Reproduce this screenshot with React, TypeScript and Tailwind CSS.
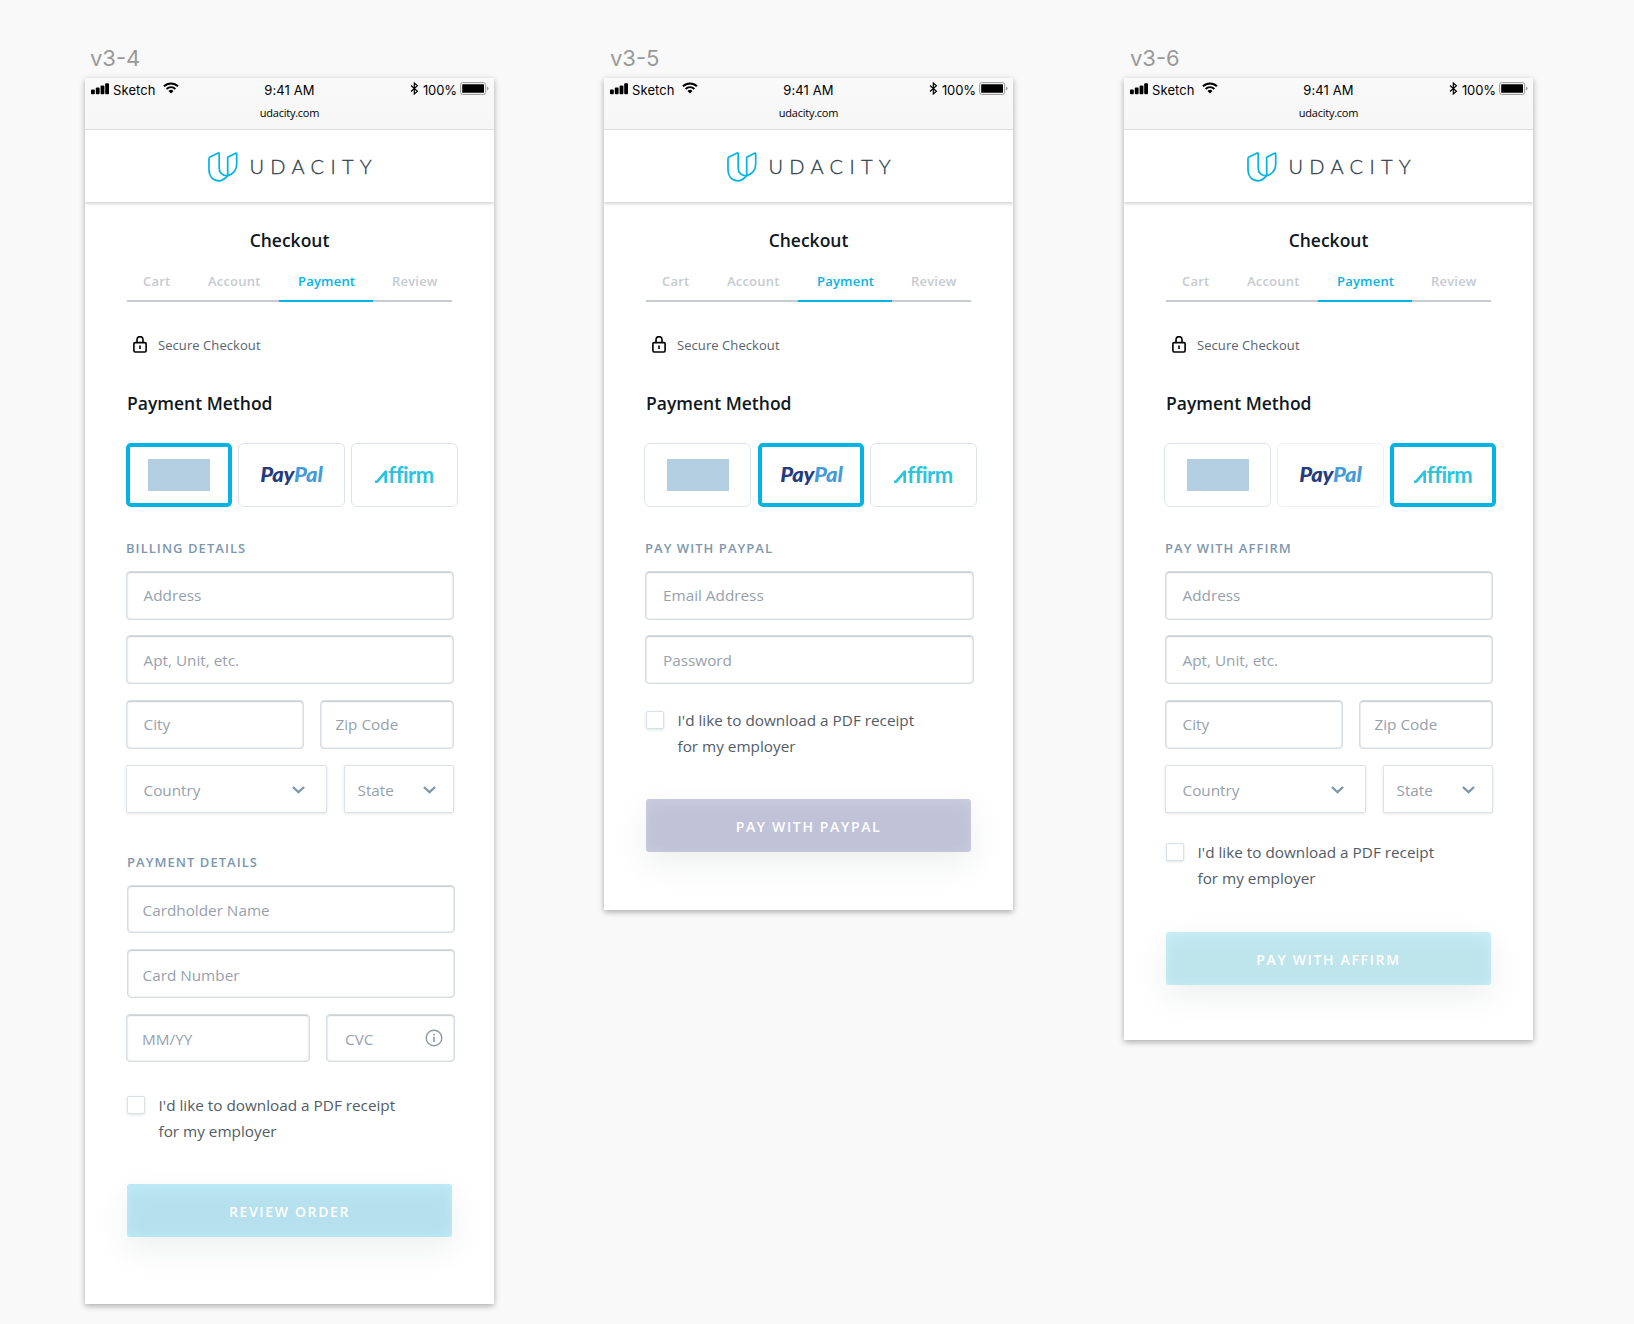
import React from "react";

const OPEN = "font-['Open_Sans','Noto_Sans',sans-serif]";
const SYSTEM = "font-['Inter',sans-serif]";

type Method = "card" | "paypal" | "affirm";

function StatusBar() {
  return (
    <div className="h-[52px] border-b border-[#dedede] bg-gradient-to-b from-[#f9f9f9] to-[#f7f7f7] text-black">
      <div className={`grid h-6 grid-cols-3 items-center text-[13px] ${SYSTEM}`}>
        <div className="flex items-center pl-[6px]">
          <svg width="18" height="12" viewBox="0 0 18 12" className="mb-[3px]">
            <rect x="0" y="6.6" width="3.8" height="4.6" rx="1" />
            <rect x="4.8" y="4.6" width="3.8" height="6.6" rx="1" />
            <rect x="9.6" y="2.5" width="3.8" height="8.7" rx="1" />
            <rect x="14.2" y="0.2" width="3.8" height="11" rx="1" />
          </svg>
          <span className="ml-[4px] pt-[2px] tracking-[0.1px]">Sketch</span>
          <svg width="16" height="12" viewBox="0 0 16 12" className="mb-[4px] ml-[7px]" fill="none" stroke="#000">
            <path d="M1 4.3 A10 10 0 0 1 15 4.3" strokeWidth="2" />
            <path d="M3.6 7 A6.2 6.2 0 0 1 12.4 7" strokeWidth="1.8" />
            <path d="M8 11.4 L5.5 8.9 A3.6 3.6 0 0 1 10.5 8.9 Z" fill="#000" stroke="none" />
          </svg>
        </div>
        <div className="pt-[2px] text-center tracking-[0.1px]">9:41 AM</div>
        <div className="flex items-center justify-end pr-[5px]">
          <svg width="9" height="13" viewBox="0 0 9 13" className="mb-[4px]" fill="none" stroke="#000" strokeWidth="1.2">
            <path d="M1 3.5 L7.4 9.3 L4.3 12 V1 L7.4 3.7 L1 9.5" />
          </svg>
          <span className="ml-[4px] pt-[2px] tracking-[-0.1px]">100%</span>
          <svg width="29" height="13" viewBox="0 0 29 13" className="mb-[3px] ml-[3px]">
            <rect x="0.6" y="0.6" width="25" height="11.8" rx="2" fill="#f8f8f8" stroke="#9a9a9a" />
            <rect x="2.2" y="2.2" width="21.8" height="8.6" rx="0.5" />
            <path d="M27 4.4 A2.2 2.2 0 0 1 27 8.6 Z" fill="#9a9a9a" />
          </svg>
        </div>
      </div>
      <div className={`flex h-[22px] items-center justify-center text-[11px] tracking-[-0.25px] ${OPEN}`}>udacity.com</div>
    </div>
  );
}

function Brand() {
  return (
    <div className="flex h-[72px] items-center bg-white pl-[123px] shadow-[0_2px_3px_rgba(0,0,0,0.16)]">
      <svg width="30" height="30" viewBox="0 0 30 30" className="mt-px" fill="none" stroke="#02b3e4" strokeWidth="1.7" strokeLinejoin="round">
        <path d="M1 5.4 L10.2 1 Q11.2 0.8 11.2 2 V16 C11.2 21 14.5 23.6 19.7 23.8" />
        <path d="M1 5.4 V17 C1 24.5 5 28.8 11 28.8 C14.5 28.8 17 26.5 19.7 23.8 C25.5 21.8 28.7 18 28.7 12 V2 Q28.7 0.8 27.6 1.2 L19.7 5.2 V23.8" />
      </svg>
      <span className="ml-[11.5px] font-['Lato',sans-serif] text-[20px] font-light leading-none tracking-[6.3px] text-[#2e3d49] [-webkit-text-stroke:0.3px_#2e3d49]">
        UDACITY
      </span>
    </div>
  );
}

function Tabs() {
  const idle = "h-10 border-b-2 border-[#c5cbd1] text-[#c5cad0]";
  return (
    <div className="ml-[42px] mt-[10px] grid w-[325px] grid-cols-[62px_90px_94px_79px] text-[13px] font-semibold leading-[38px] tracking-[0.2px]">
      <div className={`${idle} pl-4`}>Cart</div>
      <div className={`${idle} pl-[19px]`}>Account</div>
      <div className="h-10 border-b-2 border-[#02b3e4] pl-[19px] text-[#02b3e4]">Payment</div>
      <div className={`${idle} pl-[19px]`}>Review</div>
    </div>
  );
}

function Lock() {
  return (
    <svg width="14" height="17" viewBox="0 0 14 17" fill="none" stroke="#000" strokeWidth="1.6">
      <rect x="0.9" y="6.6" width="12.2" height="9.4" rx="1.2" />
      <path d="M4 6.6 V3.6 A3 3 0 0 1 10 3.6 V6.6" />
      <path d="M7 9.5 V13" />
    </svg>
  );
}

function MethodCard({ on, faint, children }: { on: boolean; faint?: boolean; children: React.ReactNode }) {
  return (
    <div
      className={
        on
          ? "flex h-16 w-[106px] items-center justify-center rounded-[5px] border-4 border-[#02b3e4] bg-white"
          : `flex h-16 w-[107px] items-center justify-center rounded-[6px] border bg-white ${faint ? "border-[#eef0f4]" : "border-[#dde3ea]"}`
      }
    >
      {children}
    </div>
  );
}

function Methods({ active }: { active: Method }) {
  return (
    <div className="ml-[40px] mt-7 grid grid-cols-[107px_107px_107px] gap-[6px]">
      <div className={active === "card" ? "pl-px" : ""}>
        <MethodCard on={active === "card"}>
          <div className="h-8 w-[62px] bg-[#b4cee1]" />
        </MethodCard>
      </div>
      <div className={active === "paypal" ? "pl-px" : ""}>
        <MethodCard on={active === "paypal"} faint={active === "affirm"}>
          <span className="inline-block scale-x-[1.1] pb-[3px] font-['Lato',sans-serif] text-[20px] font-black italic leading-none tracking-[-0.2px] text-[#253b80]">
            Pay<span className="text-[#469bdb]">Pal</span>
          </span>
        </MethodCard>
      </div>
      <MethodCard on={active === "affirm"}>
        <div className="flex items-end pb-[2px]" aria-label="Affirm">
          <svg width="13" height="14" viewBox="0 0 13 14" className="mb-[3px]" fill="none" stroke="#2bc4df" strokeWidth="2.6">
            <path d="M0 12.7 H2.2 L10.7 2.6 V14" strokeLinejoin="round" />
          </svg>
          <span className="font-['Lato',sans-serif] text-[22px] font-bold leading-[23px] tracking-[-0.5px] text-[#2bc4df]">ffirm</span>
        </div>
      </MethodCard>
    </div>
  );
}

const PLACEHOLDER = "text-[15.3px] text-[#97a1ac]";

function Field({ label, className }: { label: string; className: string }) {
  return (
    <div
      className={`flex items-center rounded-[4px] border border-[#d5dce2] bg-white shadow-[inset_0_1px_1px_#c9ced3,inset_0_0_2px_#c5ccd2] ${PLACEHOLDER} ${className}`}
    >
      {label}
    </div>
  );
}

function Select({ label, className }: { label: string; className: string }) {
  return (
    <div
      className={`flex h-12 items-center justify-between rounded-[2px] border border-[#dbe2e8] bg-white pt-[2px] shadow-[0_1px_3px_rgba(46,61,73,0.12)] ${PLACEHOLDER} ${className}`}
    >
      {label}
      <svg width="13" height="8" viewBox="0 0 13 8" fill="none" stroke="#7d97ad" strokeWidth="2.3">
        <path d="M0.9 1 L6.5 6.2 L12.1 1" />
      </svg>
    </div>
  );
}

function SectionTitle({ text, className }: { text: string; className: string }) {
  return (
    <div className={`flex h-5 items-center pt-[2px] text-[13px] font-semibold tracking-[1.05px] text-[#7d97ad] ${className}`}>{text}</div>
  );
}

function AddressFields() {
  return (
    <div className="ml-[41px] mt-[13px] w-[328px]">
      <Field label="Address" className="h-[49px] pl-[16.5px]" />
      <Field label="Apt, Unit, etc." className="mt-[15px] h-[49px] pl-[16.5px] pt-[2px]" />
      <div className="mt-4 flex justify-between">
        <Field label="City" className="h-[49px] w-[178px] pl-[16.5px]" />
        <Field label="Zip Code" className="h-[49px] w-[134px] pl-[14.5px]" />
      </div>
      <div className="mt-4 flex justify-between">
        <Select label="Country" className="w-[201px] pl-[16.5px] pr-[21px]" />
        <Select label="State" className="w-[110px] pl-[12.5px] pr-[17px]" />
      </div>
    </div>
  );
}

function Receipt({ className }: { className: string }) {
  return (
    <div className={`ml-[42px] flex ${className}`}>
      <div className="mt-1 size-[18px] rounded-[2px] border border-[#d8e1e8] bg-white shadow-[0_1px_3px_rgba(46,61,73,0.15)]" />
      <div className="ml-[13.5px] text-[15.3px] leading-[26px] text-[#525c65]">
        I'd like to download a PDF receipt
        <br />
        for my employer
      </div>
    </div>
  );
}

function Action({ label, className }: { label: string; className: string }) {
  return (
    <button
      className={`ml-[42px] flex h-[53px] w-[325px] items-center justify-center rounded-[4px] pt-px text-[14px] font-semibold tracking-[1.65px] text-white ${className}`}
    >
      {label}
    </button>
  );
}

function Phone({ name, active, className, children }: { name: string; active: Method; className: string; children: React.ReactNode }) {
  return (
    <div>
      <div className={`h-[34px] text-[22px] leading-[28px] text-[#999] ${active === "card" ? "pl-[5px]" : "pl-[6px]"} ${SYSTEM}`}>{name}</div>
      <div className={`w-[409px] overflow-hidden bg-white shadow-[0_2px_6px_rgba(0,0,0,0.32)] ${OPEN} ${className}`}>
        <StatusBar />
        <Brand />
        <h1 className="mt-[26px] h-6 text-center text-[17.5px] font-semibold leading-6 text-[#0f1820]">Checkout</h1>
        <Tabs />
        <div className="ml-[48px] mt-8 flex h-[22px] items-center text-[13px] text-[#58646f]">
          <div className="mb-[2px]">
            <Lock />
          </div>
          <span className="ml-[11px] pt-[2px] tracking-[0.07px]">Secure Checkout</span>
        </div>
        <h2 className="ml-[42px] mt-[35px] h-6 text-[17.5px] font-semibold leading-6 text-[#0f1820]">Payment Method</h2>
        <Methods active={active} />
        {children}
      </div>
    </div>
  );
}

export default function App() {
  return (
    <div className="flex h-[1324px] w-[1634px] items-start overflow-hidden bg-[#f9f9f9] pl-[85px] pt-[44px]">
      <Phone name="v3-4" active="card" className="h-[1226px]">
        <SectionTitle text="BILLING DETAILS" className="ml-[41px] mt-[31px]" />
        <AddressFields />
        <SectionTitle text="PAYMENT DETAILS" className="ml-[42px] mt-[39px]" />
        <div className="ml-[42px] mt-[13px] w-[328px]">
          <Field label="Cardholder Name" className="h-12 pl-[14.5px] pt-[2px]" />
          <Field label="Card Number" className="mt-4 h-[49px] pl-[14.5px] pt-[3px]" />
        </div>
        <div className="ml-[41px] mt-4 flex w-[329px] justify-between">
          <Field label="MM/YY" className="h-[48px] w-[184px] pl-[15px] pt-[2px]" />
          <div className="grid">
            <Field label="CVC" className="col-start-1 row-start-1 h-[48px] w-[129px] pl-[18px] pt-[2px]" />
            <svg width="18" height="18" viewBox="0 0 18 18" className="col-start-1 row-start-1 mr-3 self-center justify-self-end" fill="none" stroke="#8d9aa7" strokeWidth="1.4">
              <circle cx="9" cy="9" r="7.8" />
              <path d="M9 7.8 V13 M9 4.8 V6.4" strokeWidth="1.6" />
            </svg>
          </div>
        </div>
        <Receipt className="mt-[30px]" />
        <Action
          label="REVIEW ORDER"
          className="mt-10 bg-[#b6e0ed] shadow-[0_12px_32px_rgba(30,45,50,0.08),inset_0_8px_18px_-4px_#beebf8,inset_0_0_10px_#beebf8]"
        />
      </Phone>
      <div className="w-[110px]" />
      <Phone name="v3-5" active="paypal" className="h-[832px]">
        <SectionTitle text="PAY WITH PAYPAL" className="ml-[41px] mt-[31px]" />
        <div className="ml-[41px] mt-[13px] w-[329px]">
          <Field label="Email Address" className="h-[49px] pl-[17px]" />
          <Field label="Password" className="mt-[15px] h-[49px] pl-[17px] pt-[2px]" />
        </div>
        <Receipt className="mt-[23px]" />
        <Action
          label="PAY WITH PAYPAL"
          className="mt-10 bg-[#c0c2d8] shadow-[0_12px_32px_rgba(30,45,50,0.08),inset_0_8px_18px_-4px_#caccdf,inset_0_0_10px_#c8cade]"
        />
      </Phone>
      <div className="w-[111px]" />
      <Phone name="v3-6" active="affirm" className="h-[962px]">
        <SectionTitle text="PAY WITH AFFIRM" className="ml-[41px] mt-[31px]" />
        <AddressFields />
        <Receipt className="mt-[26px]" />
        <Action
          label="PAY WITH AFFIRM"
          className="mt-[41px] bg-[#bee4ec] shadow-[0_12px_32px_rgba(30,45,50,0.08),inset_0_8px_18px_-4px_#c8eff6,inset_0_0_10px_#c6ecf4]"
        />
      </Phone>
    </div>
  );
}
